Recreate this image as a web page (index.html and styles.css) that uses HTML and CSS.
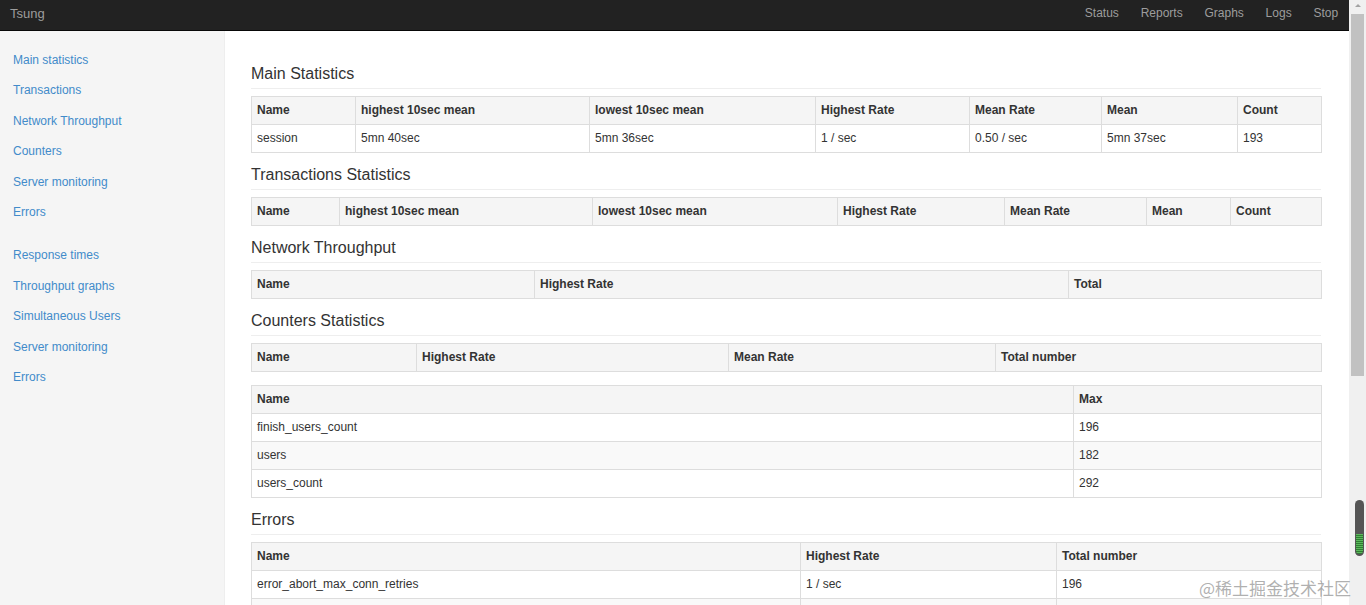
FILE: index.html
```html
<!DOCTYPE html>
<html>
<head>
<meta charset="utf-8">
<title>Tsung</title>
<link rel="stylesheet" href="styles.css">
</head>
<body>
<div class="viewport">
  <div class="page">
    <nav class="navbar">
      <a class="brand" href="#">Tsung</a>
      <ul class="nav-links">
        <li><a href="#">Status</a></li>
        <li><a href="#">Reports</a></li>
        <li><a href="#">Graphs</a></li>
        <li><a href="#">Logs</a></li>
        <li><a href="#">Stop</a></li>
      </ul>
    </nav>
    <div class="layout">
      <aside class="sidebar">
        <ul class="side-nav">
          <li><a href="#">Main statistics</a></li>
          <li><a href="#">Transactions</a></li>
          <li><a href="#">Network Throughput</a></li>
          <li><a href="#">Counters</a></li>
          <li><a href="#">Server monitoring</a></li>
          <li><a href="#">Errors</a></li>
        </ul>
        <ul class="side-nav">
          <li><a href="#">Response times</a></li>
          <li><a href="#">Throughput graphs</a></li>
          <li><a href="#">Simultaneous Users</a></li>
          <li><a href="#">Server monitoring</a></li>
          <li><a href="#">Errors</a></li>
        </ul>
      </aside>
      <main class="main">
        <h3 class="section-title">Main Statistics</h3>
        <table class="stats t-main">
          <colgroup><col><col><col><col><col><col><col></colgroup>
          <thead><tr><th>Name</th><th>highest 10sec mean</th><th>lowest 10sec mean</th><th>Highest Rate</th><th>Mean Rate</th><th>Mean</th><th>Count</th></tr></thead>
          <tbody><tr><td>session</td><td>5mn 40sec</td><td>5mn 36sec</td><td>1 / sec</td><td>0.50 / sec</td><td>5mn 37sec</td><td>193</td></tr></tbody>
        </table>

        <h3 class="section-title">Transactions Statistics</h3>
        <table class="stats t-trans">
          <colgroup><col><col><col><col><col><col><col></colgroup>
          <thead><tr><th>Name</th><th>highest 10sec mean</th><th>lowest 10sec mean</th><th>Highest Rate</th><th>Mean Rate</th><th>Mean</th><th>Count</th></tr></thead>
        </table>

        <h3 class="section-title">Network Throughput</h3>
        <table class="stats t-net">
          <colgroup><col><col><col></colgroup>
          <thead><tr><th>Name</th><th>Highest Rate</th><th>Total</th></tr></thead>
        </table>

        <h3 class="section-title">Counters Statistics</h3>
        <table class="stats t-count">
          <colgroup><col><col><col><col></colgroup>
          <thead><tr><th>Name</th><th>Highest Rate</th><th>Mean Rate</th><th>Total number</th></tr></thead>
        </table>
        <table class="stats striped t-max">
          <colgroup><col><col></colgroup>
          <thead><tr><th>Name</th><th>Max</th></tr></thead>
          <tbody>
            <tr><td>finish_users_count</td><td>196</td></tr>
            <tr><td>users</td><td>182</td></tr>
            <tr><td>users_count</td><td>292</td></tr>
          </tbody>
        </table>

        <h3 class="section-title">Errors</h3>
        <table class="stats striped t-err">
          <colgroup><col><col><col></colgroup>
          <thead><tr><th>Name</th><th>Highest Rate</th><th>Total number</th></tr></thead>
          <tbody>
            <tr><td>error_abort_max_conn_retries</td><td>1 / sec</td><td>196</td></tr>
            <tr><td>error_connect_econnrefused</td><td>1 / sec</td><td>12</td></tr>
          </tbody>
        </table>
      </main>
    </div>
  </div>
  <div class="scrollbar">
    <div class="scroll-arrow"></div>
    <div class="scroll-thumb"></div>
  </div>
</div>
<div class="widget"><div class="widget-fill"></div></div>
<div class="watermark">@稀土掘金技术社区</div>
</body>
</html>
```

FILE: styles.css
```css
html, body {
  margin: 0;
  padding: 0;
  height: 605px;
  overflow: hidden;
  background: #fff;
  font-family: "Liberation Sans", Arial, sans-serif;
  color: #333;
}

.viewport {
  display: flex;
  height: 605px;
  width: 1366px;
}

.page {
  flex: 1;
  min-width: 0;
  height: 605px;
  overflow: hidden;
}

.navbar {
  height: 31px;
  background: #222;
  border-bottom: 1px solid #080808;
  box-sizing: border-box;
  display: flex;
  align-items: flex-start;
  justify-content: space-between;
}

.brand {
  color: #9d9d9d;
  font-size: 13px;
  line-height: 27px;
  text-decoration: none;
  padding-left: 10px;
}

.nav-links {
  list-style: none;
  margin: 0;
  padding: 0;
  display: flex;
}

.nav-links a {
  display: block;
  color: #9d9d9d;
  font-size: 12px;
  text-decoration: none;
  padding: 0 10.9px;
  line-height: 27px;
}

.layout {
  display: flex;
  height: 574px;
}

.sidebar {
  width: 225px;
  flex: none;
  background: #f5f5f5;
  border-right: 1px solid #eee;
  box-sizing: border-box;
  padding-top: 14px;
}

.side-nav {
  list-style: none;
  margin: 0 0 13px 0;
  padding: 0;
}

.side-nav a {
  display: block;
  color: #428bca;
  font-size: 12px;
  text-decoration: none;
  padding: 0 13px;
  line-height: 30.4px;
}

.main {
  flex: 1;
  min-width: 0;
  padding: 34px 28px 0 26px;
}

.section-title {
  font-size: 16px;
  font-weight: normal;
  line-height: 18px;
  margin: 0 0 7px 0;
  padding-bottom: 5px;
  border-bottom: 1px solid #eee;
  color: #333;
}

.stats {
  width: 100%;
  table-layout: fixed;
  border-collapse: collapse;
  font-size: 12px;
  margin-bottom: 13px;
}

.stats th, .stats td {
  border: 1px solid #ddd;
  padding: 5px 5px;
  line-height: 17px;
  text-align: left;
  white-space: nowrap;
  overflow: hidden;
}

.stats th {
  background: #f5f5f5;
  font-weight: bold;
  color: #333;
}

.stats td {
  color: #333;
}

.striped tbody tr:nth-child(even) td {
  background: #f9f9f9;
}

.t-main col:nth-child(1) { width: 104px; }
.t-main col:nth-child(2) { width: 234px; }
.t-main col:nth-child(3) { width: 226px; }
.t-main col:nth-child(4) { width: 154px; }
.t-main col:nth-child(5) { width: 132px; }
.t-main col:nth-child(6) { width: 136px; }
.t-main col:nth-child(7) { width: 84px; }

.t-trans col:nth-child(1) { width: 88px; }
.t-trans col:nth-child(2) { width: 253px; }
.t-trans col:nth-child(3) { width: 245px; }
.t-trans col:nth-child(4) { width: 167px; }
.t-trans col:nth-child(5) { width: 142px; }
.t-trans col:nth-child(6) { width: 84px; }
.t-trans col:nth-child(7) { width: 91px; }

.t-net col:nth-child(1) { width: 283px; }
.t-net col:nth-child(2) { width: 534px; }
.t-net col:nth-child(3) { width: 253px; }

.t-count col:nth-child(1) { width: 165px; }
.t-count col:nth-child(2) { width: 312px; }
.t-count col:nth-child(3) { width: 267px; }
.t-count col:nth-child(4) { width: 326px; }

.t-max col:nth-child(1) { width: 822px; }
.t-max col:nth-child(2) { width: 248px; }

.t-err col:nth-child(1) { width: 549px; }
.t-err col:nth-child(2) { width: 256px; }
.t-err col:nth-child(3) { width: 265px; }

.scrollbar {
  width: 17px;
  flex: none;
  background: #f0f0f0;
  box-sizing: border-box;
  padding: 0 2px 0 2px;
  display: flex;
  flex-direction: column;
  align-items: center;
}

.scroll-arrow {
  width: 0;
  height: 0;
  margin-top: 4px;
  border-left: 3px solid transparent;
  border-right: 3px solid transparent;
  border-bottom: 3px solid #a3a3a3;
}

.scroll-thumb {
  margin-top: 7px;
  width: 13px;
  height: 362px;
  background: #c1c1c1;
}

.widget {
  position: absolute;
  left: 1355px;
  top: 500px;
  width: 9px;
  height: 56px;
  border-radius: 5px;
  background: #555;
  overflow: hidden;
  display: flex;
  flex-direction: column;
  justify-content: flex-end;
}

.widget-fill {
  height: 20px;
  margin: 0 1px 2px 1px;
  border-radius: 0 0 4px 4px;
  background: repeating-linear-gradient(to bottom, #5cb85c 0, #5cb85c 1px, #2e7d32 1px, #2e7d32 2px);
}

.watermark {
  position: absolute;
  left: 1199px;
  top: 577px;
  font-family: "Noto Sans CJK SC", "Liberation Sans", sans-serif;
  font-size: 17px;
  line-height: 22px;
  color: rgba(150, 150, 150, 0.75);
  white-space: nowrap;
}
```
